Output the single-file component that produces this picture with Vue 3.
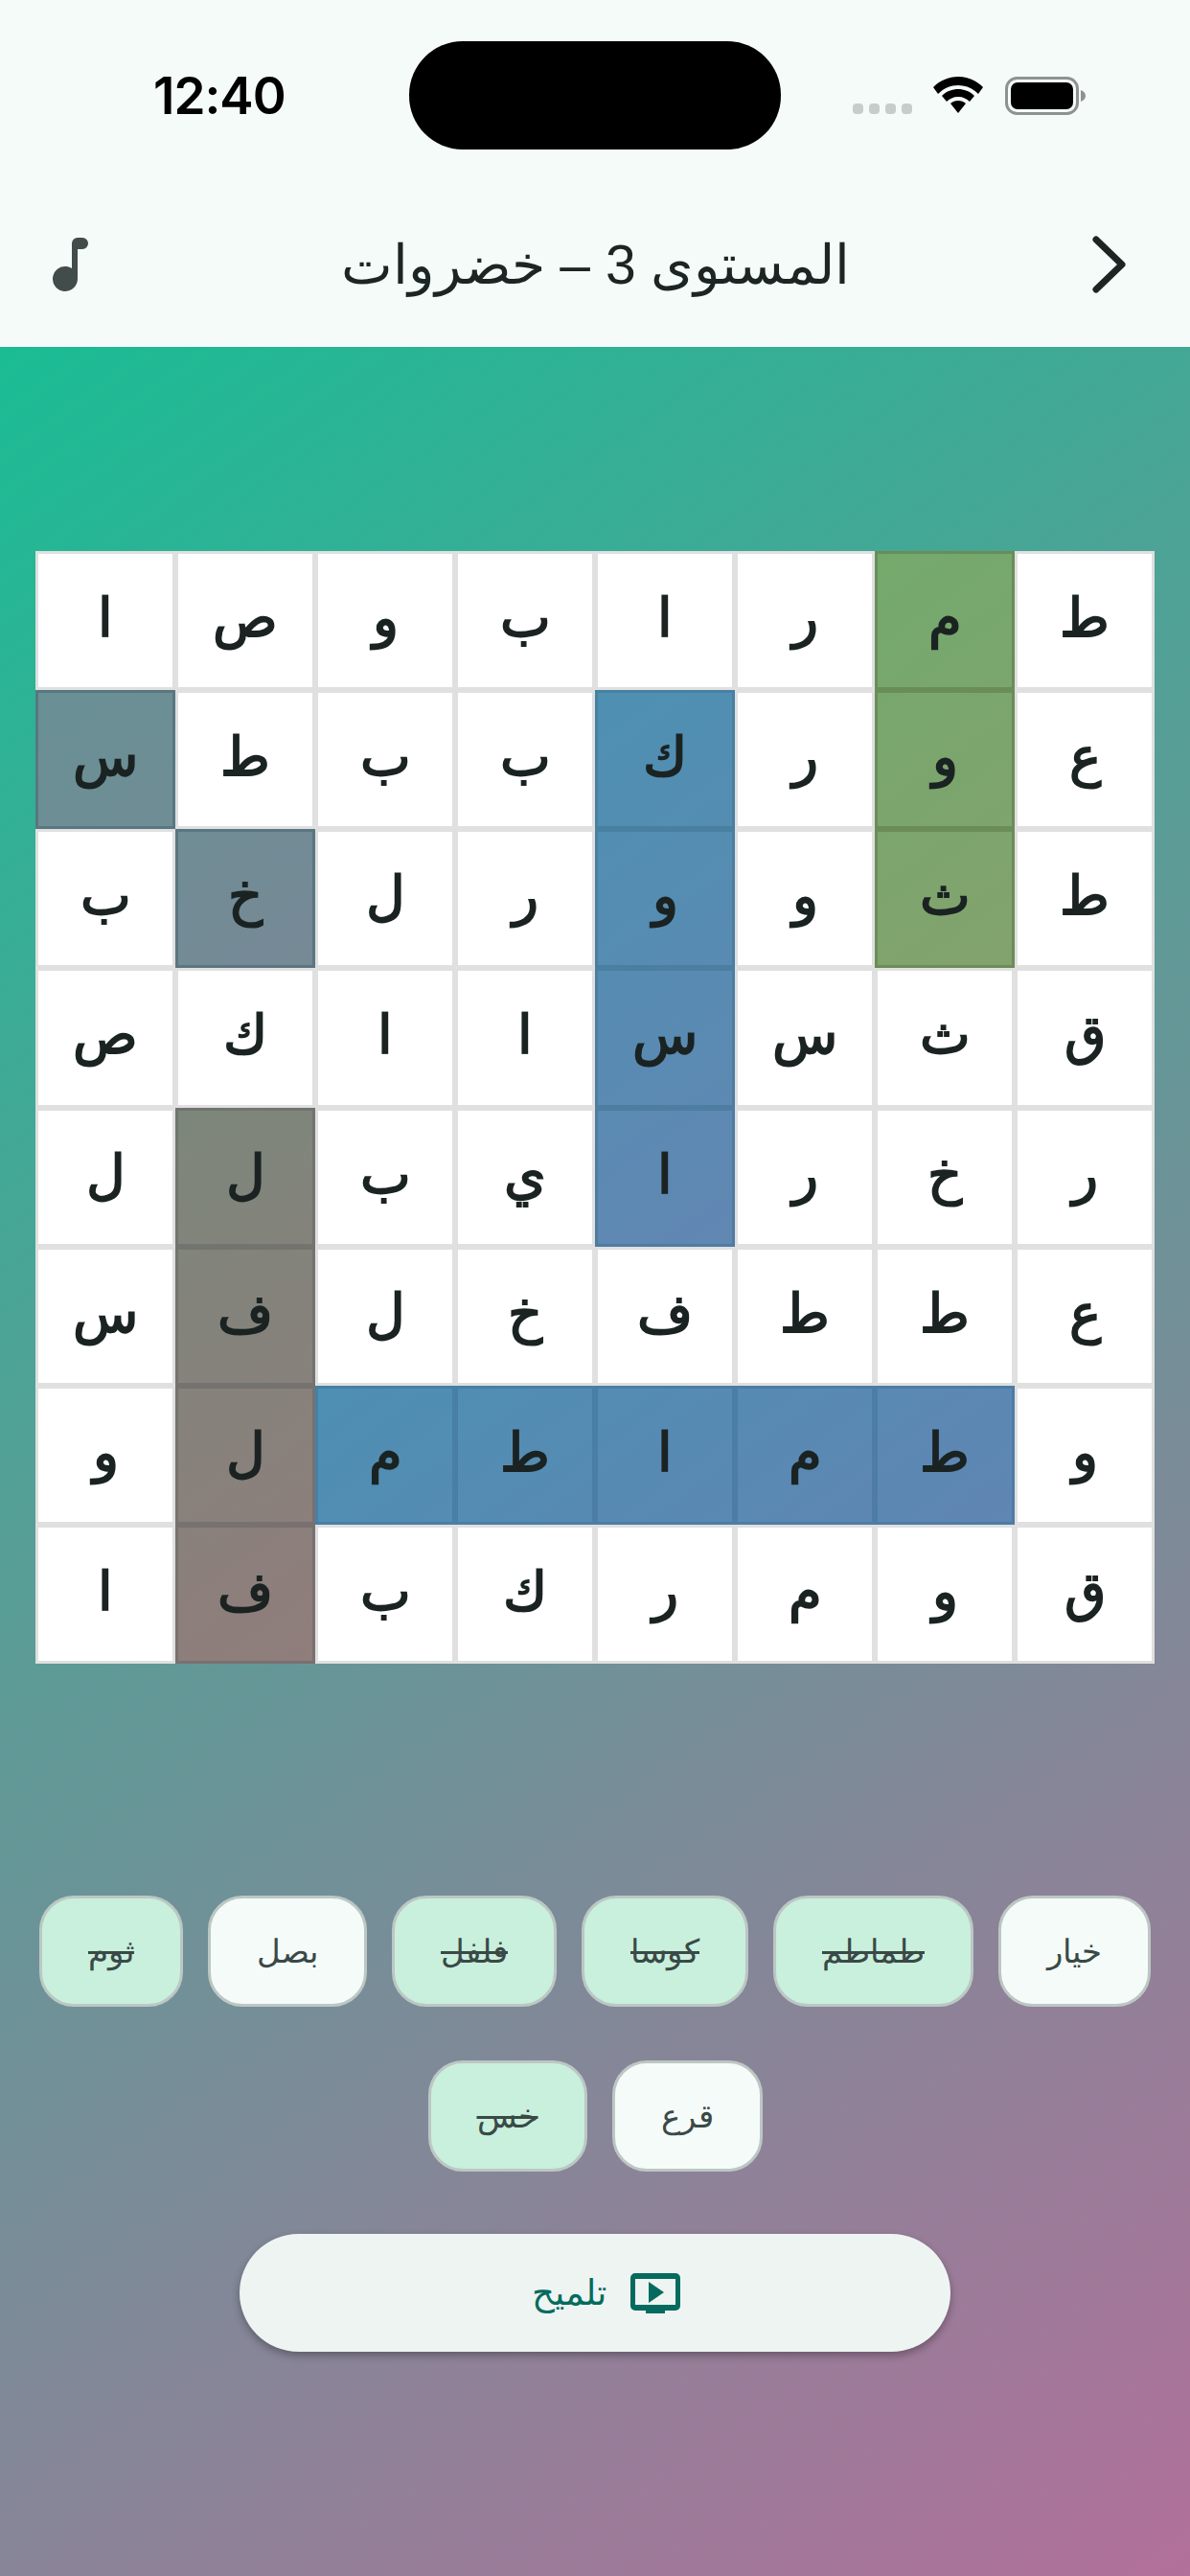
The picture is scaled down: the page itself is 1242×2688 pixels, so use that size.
<template>
  <div class="page">
    <header class="topbar">
      <div class="status">
        <span class="time">12:40</span>
        <div class="island"></div>
        <div class="status-icons">
          <div class="dots"><i></i><i></i><i></i><i></i></div>
          <svg class="wifi" width="52" height="38" viewBox="0 0 52 38">
            <path d="M26 0C16 0 7 4 0 11l5 7c6-6 13-9 21-9s15 3 21 9l5-7C45 4 36 0 26 0z" fill="#000" />
            <path d="M26 13c-6 0-12 2-17 7l5 6c3-3 7-5 12-5s9 2 12 5l5-6c-5-5-11-7-17-7z" fill="#000" />
            <path d="M26 25c-3 0-6 1-8 3l8 10 8-10c-2-2-5-3-8-3z" fill="#000" />
          </svg>
          <svg class="battery" width="84" height="40" viewBox="0 0 84 40">
            <rect x="1.5" y="1.5" width="74" height="37" rx="11" fill="none" stroke="#8e9391" stroke-width="3" />
            <rect x="6" y="6" width="65" height="28" rx="7" fill="#000" />
            <path d="M79 14c3 1 5 3 5 6s-2 5-5 6z" fill="#8e9391" />
          </svg>
        </div>
      </div>
      <div class="nav">
        <svg class="note" width="38" height="57" viewBox="0 0 38 57">
          <path d="M20 6a6 6 0 0 1 6-6h5a6 6 0 0 1 0 12h-5v31a13 13 0 1 1-6-11z" fill="#424c4a" />
        </svg>
        <h1 class="title" dir="rtl">المستوى 3 – خضروات</h1>
        <svg class="chevron" width="36" height="60" viewBox="0 0 36 60">
          <path d="M4 4l27 26L4 56" fill="none" stroke="#1c2523" stroke-width="7" stroke-linecap="round" stroke-linejoin="round" />
        </svg>
      </div>
    </header>

    <main class="board">
      <div class="grid">
        <div
          v-for="cell in cells"
          :key="cell.id"
          class="cell"
          :class="cell.word"
        >{{ cell.letter }}</div>
      </div>

      <div class="words" dir="rtl">
        <div v-for="(line, i) in wordLines" :key="i" class="word-line">
          <span
            v-for="w in line"
            :key="w.text"
            class="chip"
            :class="{ found: w.found }"
          >{{ w.text }}</span>
        </div>
      </div>

      <button class="hint" dir="rtl">
        <svg width="52" height="42" viewBox="0 0 52 42">
          <path d="M5 0h42a5 5 0 0 1 5 5v29a5 5 0 0 1-5 5H36v3H16v-3H5a5 5 0 0 1-5-5V5a5 5 0 0 1 5-5zm0 6v27h42V6z" fill="#046b5e" fill-rule="evenodd" />
          <path d="M19 9l16 11-16 11z" fill="#046b5e" />
        </svg>
        <span>تلميح</span>
      </button>
    </main>
  </div>
</template>

<script setup>
const rows = [
  'ا ص و ب ا ر م ط',
  'س ط ب ب ك ر و ع',
  'ب خ ل ر و و ث ط',
  'ص ك ا ا س س ث ق',
  'ل ل ب ي ا ر خ ر',
  'س ف ل خ ف ط ط ع',
  'و ل م ط ا م ط و',
  'ا ف ب ك ر م و ق'
]

// خلايا الكلمات التي تم العثور عليها
const placed = {
  thoom: ['0-6', '1-6', '2-6'],
  kousa: ['1-4', '2-4', '3-4', '4-4'],
  khass: ['1-0', '2-1'],
  felfel: ['4-1', '5-1', '6-1', '7-1'],
  tamatem: ['6-2', '6-3', '6-4', '6-5', '6-6']
}

const wordAt = (id) => Object.keys(placed).find((k) => placed[k].includes(id)) || ''

const cells = rows.flatMap((row, r) =>
  row.split(' ').map((letter, c) => ({
    id: r + '-' + c,
    letter,
    word: wordAt(r + '-' + c)
  }))
)

const wordLines = [
  [
    { text: 'خيار', found: false },
    { text: 'طماطم', found: true },
    { text: 'كوسا', found: true },
    { text: 'فلفل', found: true },
    { text: 'بصل', found: false },
    { text: 'ثوم', found: true }
  ],
  [
    { text: 'قرع', found: false },
    { text: 'خس', found: true }
  ]
]
</script>

<style>
html, body {
  margin: 0;
  padding: 0;
}
</style>

<style scoped>
.page {
  width: 1242px;
  height: 2688px;
  display: flex;
  flex-direction: column;
  overflow: hidden;
  font-family: "Liberation Sans", serif;
}

.topbar {
  height: 362px;
  background: #f5fbf8;
  flex-shrink: 0;
}

.status {
  display: flex;
  padding: 43px 0 0 160px;
  height: 113px;
}

.time {
  width: 267px;
  font-family: Inter, sans-serif;
  font-weight: 600;
  font-size: 53px;
  line-height: 114px;
  letter-spacing: -1px;
  color: #000;
}

.island {
  width: 388px;
  height: 113px;
  border-radius: 56px;
  background: #000;
}

.status-icons {
  display: flex;
  align-items: flex-start;
  margin-left: 75px;
  padding-top: 37px;
}

.dots {
  display: flex;
  gap: 6px;
  width: 84px;
  padding-top: 28px;
}

.dots i {
  width: 11px;
  height: 11px;
  border-radius: 4px;
  background: #c8ccca;
}

.battery {
  margin-left: 23px;
}

.nav {
  display: flex;
  align-items: center;
  justify-content: space-between;
  padding: 0 66px 0 55px;
  margin-top: 90px;
  height: 60px;
}

.title {
  margin: 0 0 0 10px;
  font-size: 57px;
  font-weight: 400;
  color: #1c2523;
}

.board {
  flex: 1;
  padding-top: 213px;
  background: linear-gradient(145deg, #1abc94, #b2709a);
}

.grid {
  display: grid;
  grid-template-columns: repeat(8, 146px);
  grid-template-rows: repeat(8, 145.125px);
  justify-content: center;
}

.cell {
  display: flex;
  align-items: center;
  justify-content: center;
  box-sizing: border-box;
  padding-bottom: 6px;
  border: 3px solid #e0e0e0;
  background: #fff;
  font-size: 56px;
  font-weight: 700;
  color: #1a2322;
}

.cell.thoom {
  background: rgba(187, 173, 52, 0.41);
  border-color: rgba(100, 130, 80, 0.7);
}

.cell.kousa {
  background: rgba(100, 110, 218, 0.41);
  border-color: rgba(60, 110, 140, 0.45);
}

.cell.khass {
  background: rgba(193, 95, 151, 0.41);
  border-color: rgba(80, 110, 120, 0.7);
}

.cell.felfel {
  background: rgba(205, 90, 85, 0.41);
  border-color: rgba(100, 100, 100, 0.5);
}

.cell.tamatem {
  background: rgba(62, 124, 218, 0.41);
  border-color: rgba(60, 110, 150, 0.45);
}

.words {
  display: flex;
  flex-direction: column;
  gap: 56px;
  margin-top: 242px;
}

.word-line {
  display: flex;
  justify-content: center;
  gap: 26px;
}

.chip {
  box-sizing: border-box;
  height: 116px;
  padding: 0 48px;
  display: flex;
  align-items: center;
  border: 3px solid #bcc7c4;
  border-radius: 36px;
  background: #f5fbf8;
  font-size: 34px;
  color: #3a4947;
}

.chip.found {
  background: #c8f0dc;
  text-decoration: line-through;
}

.hint {
  display: flex;
  align-items: center;
  justify-content: center;
  gap: 25px;
  width: 742px;
  height: 123px;
  margin: 65px auto 0;
  padding: 0 0 0 22px;
  border: none;
  border-radius: 62px;
  background: #eef4f2;
  box-shadow: 0 4px 8px rgba(0, 0, 0, 0.3);
  font-family: inherit;
  font-size: 37px;
  color: #046b5e;
}
</style>
